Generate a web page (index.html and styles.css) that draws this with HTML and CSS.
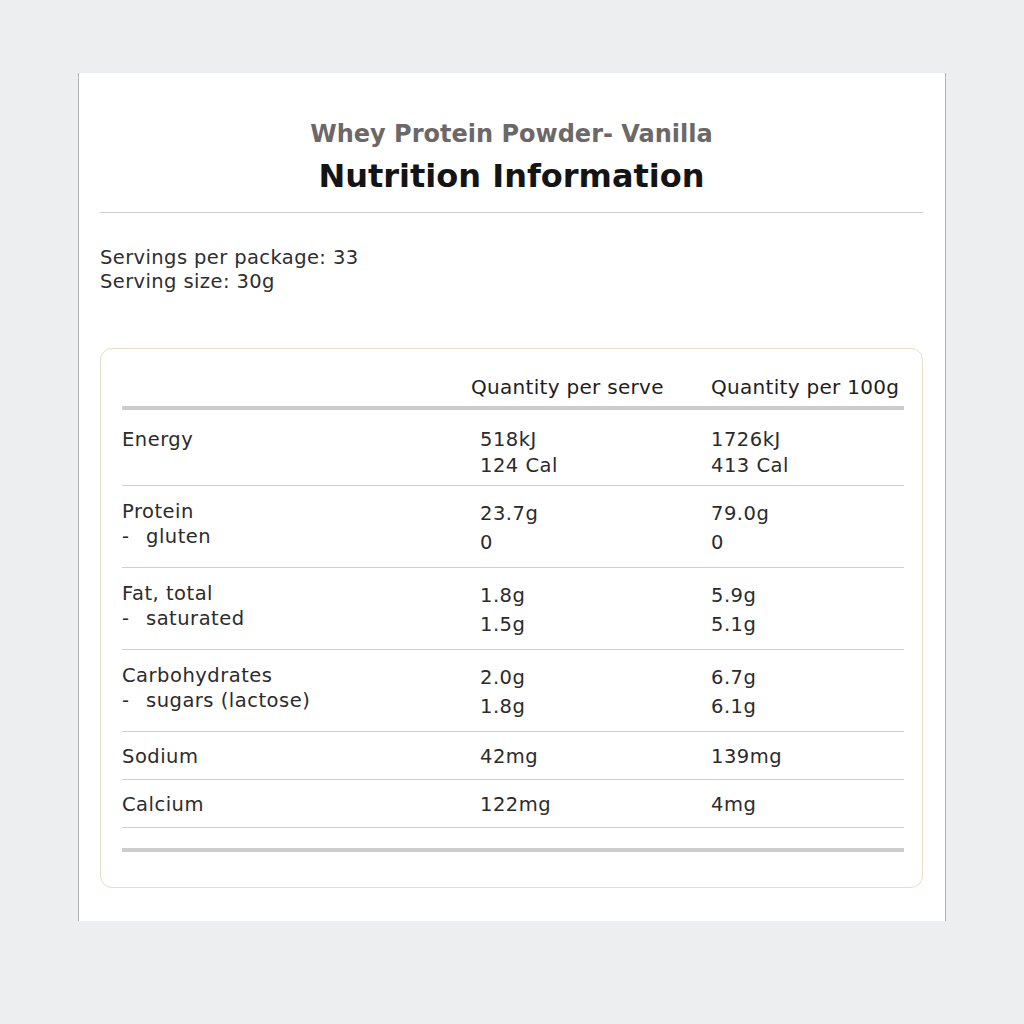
FILE: index.html
```html
<!DOCTYPE html>
<html lang="en">
<head>
<meta charset="utf-8">
<title>Nutrition Information</title>
<link rel="stylesheet" href="styles.css">
</head>
<body>
<main class="panel">
  <header class="heading">
    <p class="subtitle">Whey Protein Powder- Vanilla</p>
    <h1 class="title">Nutrition Information</h1>
  </header>
  <hr class="divider">
  <div class="servings">
    <p>Servings per package: 33</p>
    <p>Serving size: 30g</p>
  </div>
  <section class="card">
    <div class="row row-head">
      <div class="cell"></div>
      <div class="cell head">Quantity per serve</div>
      <div class="cell head">Quantity per 100g</div>
    </div>
    <div class="row row-energy">
      <div class="cell label"><span>Energy</span></div>
      <div class="cell val val1"><span>518kJ</span><span>124 Cal</span></div>
      <div class="cell val"><span>1726kJ</span><span>413 Cal</span></div>
    </div>
    <div class="row">
      <div class="cell label"><span>Protein</span><span><span class="dash">-</span>gluten</span></div>
      <div class="cell val val1"><span>23.7g</span><span>0</span></div>
      <div class="cell val"><span>79.0g</span><span>0</span></div>
    </div>
    <div class="row">
      <div class="cell label"><span>Fat, total</span><span><span class="dash">-</span>saturated</span></div>
      <div class="cell val val1"><span>1.8g</span><span>1.5g</span></div>
      <div class="cell val"><span>5.9g</span><span>5.1g</span></div>
    </div>
    <div class="row">
      <div class="cell label"><span>Carbohydrates</span><span><span class="dash">-</span>sugars (lactose)</span></div>
      <div class="cell val val1"><span>2.0g</span><span>1.8g</span></div>
      <div class="cell val"><span>6.7g</span><span>6.1g</span></div>
    </div>
    <div class="row row-single">
      <div class="cell label"><span>Sodium</span></div>
      <div class="cell val val1"><span>42mg</span></div>
      <div class="cell val"><span>139mg</span></div>
    </div>
    <div class="row row-single">
      <div class="cell label"><span>Calcium</span></div>
      <div class="cell val val1"><span>122mg</span></div>
      <div class="cell val"><span>4mg</span></div>
    </div>
    <div class="footbar"></div>
  </section>
</main>
</body>
</html>
```
FILE: styles.css
```css
* { box-sizing: border-box; }

html, body {
  margin: 0;
  padding: 0;
}

body {
  background: #edeef0;
  font-family: "DejaVu Sans", "Liberation Sans", sans-serif;
  color: #2b2b2b;
  padding-top: 73px;
  height: 1024px;
}

.panel {
  margin-left: 78px;
  width: 868px;
  background: #ffffff;
  border-left: 1px solid #b4b4b4;
  border-right: 1px solid #b4b4b4;
  padding: 46px 22px 33px 21px;
}

.heading {
  text-align: center;
}

.subtitle {
  margin: 0;
  font-size: 24px;
  line-height: 30px;
  font-weight: 700;
  color: #6c6868;
}

.title {
  margin: 7px 0 0;
  font-size: 32px;
  line-height: 40px;
  font-weight: 700;
  color: #141414;
}

.divider {
  margin: 16px 0 0;
  border: 0;
  border-top: 1px solid #cfcfcf;
  height: 0;
}

.servings {
  margin-top: 33px;
  font-size: 19.5px;
  letter-spacing: 0.4px;
  line-height: 24px;
  color: #2e2e2e;
}

.servings p {
  margin: 0;
}

.card {
  margin-top: 54px;
  border: 1px solid #e8ddc6;
  border-radius: 12px;
  padding: 26px 18px 35px 21px;
}

.row {
  display: grid;
  grid-template-columns: 349px 240px 1fr;
  padding: 13px 0 10px;
  border-bottom: 1px solid #cfcfcf;
  font-size: 19.5px;
  letter-spacing: 0.5px;
}

.cell {
  display: flex;
  flex-direction: column;
}

.label {
  line-height: 25px;
}

.dash {
  display: inline-block;
  width: 24px;
}

.val {
  line-height: 29px;
}

.val1 {
  padding-left: 9px;
}

.row-head {
  padding: 0 0 6px;
  border-bottom: 4px solid #cdcdcb;
}

.head {
  font-size: 20px;
  letter-spacing: 0.3px;
  line-height: 25px;
  color: #1e1e1e;
}

.row-energy {
  padding: 17px 0 6px;
}

.row-energy .val {
  line-height: 26px;
}

.row-single {
  padding: 12px 0 10px;
}

.row-single .val {
  line-height: 25px;
}

.footbar {
  margin-top: 20px;
  height: 4px;
  background: #cdcdcb;
}
```
